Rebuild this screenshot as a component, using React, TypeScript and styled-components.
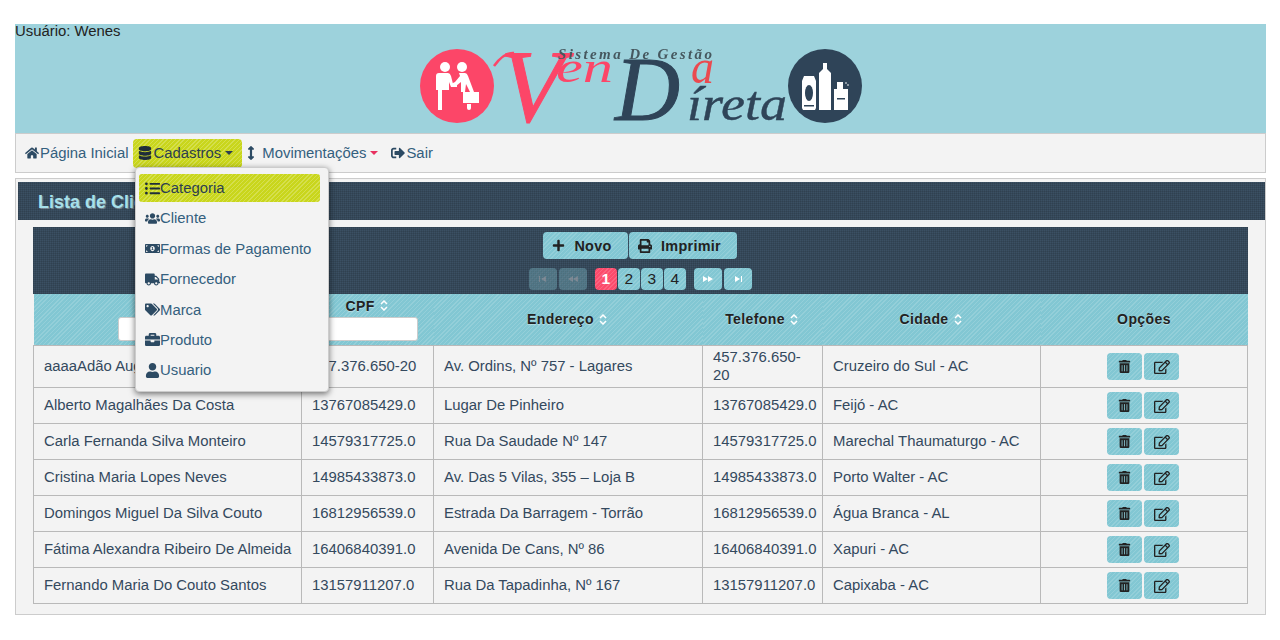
import styled, { createGlobalStyle, css } from "styled-components";
import {
  FaHome,
  FaDatabase,
  FaListUl,
  FaUsers,
  FaMoneyBillAlt,
  FaTruck,
  FaTags,
  FaBriefcase,
  FaUser,
  FaArrowsAltV,
  FaSignOutAlt,
  FaPlus,
  FaPrint,
  FaTrashAlt,
  FaRegEdit,
} from "react-icons/fa";

const GlobalStyle = createGlobalStyle`
  html, body {
    margin: 0;
    padding: 0;
    background: #fff;
    font-family: "Liberation Sans", Arial, sans-serif;
    font-size: 14.88px;
    color: #34495e;
  }
`;

const stripes = (base: string, light: string) => css`
  background-color: ${base};
  background-image: repeating-linear-gradient(135deg, ${light} 0 1px, transparent 1px 3px);
`;

const darkGrid = css`
  background-color: #3b5063;
  background-image:
    repeating-linear-gradient(0deg, rgba(0, 0, 0, 0.1) 0 1px, transparent 1px 2px),
    repeating-linear-gradient(90deg, rgba(0, 0, 0, 0.1) 0 1px, transparent 1px 2px);
`;

const Page = styled.div`
  width: 1251px;
  padding: 24px 0 0 15px;
`;

const Header = styled.header`
  display: grid;
  height: 109px;
  background: #9dd2dc;
`;

const UserLabel = styled.div`
  grid-area: 1 / 1;
  color: #222;
  line-height: 15px;
`;

const Logo = styled.svg`
  grid-area: 1 / 1;
  justify-self: center;
  margin: 16px 0 0 4px;
  overflow: visible;
  filter: blur(0.5px);
`;

const Nav = styled.nav`
  position: relative;
  display: flex;
  align-items: center;
  height: 38px;
  padding: 0 4px;
  background: #f3f3f3;
  border: 1px solid #ccc;
`;

const NavLink = styled.a<{ $active?: boolean; $gap?: number; $end?: number }>`
  display: flex;
  align-items: center;
  gap: ${(p) => p.$gap ?? 1}px;
  height: 29px;
  padding: 0 ${(p) => p.$end ?? 5}px 0 5px;
  border-radius: 4px;
  color: ${(p) => (p.$active ? "#2c3e50" : "#34607e")};
  ${(p) => p.$active && stripes("#c9d61c", "rgba(255, 255, 255, 0.22)")}

  svg {
    flex: none;
    color: ${(p) => (p.$active ? "#1f2d3a" : "#2c4a63")};
  }
`;

const NarrowIcon = styled.span`
  display: flex;
  justify-content: center;
  width: 8px;
  margin-right: 7px;
`;

const Caret = styled.span<{ $color: string; $space: number }>`
  width: 0;
  height: 0;
  margin-left: ${(p) => p.$space}px;
  border-top: 4px solid ${(p) => p.$color};
  border-left: 4px solid transparent;
  border-right: 4px solid transparent;
`;

const Menu = styled.ul`
  position: absolute;
  z-index: 5;
  top: 33px;
  left: 119px;
  width: 194px;
  box-sizing: border-box;
  margin: 0;
  padding: 6px 8px 4px 3px;
  list-style: none;
  background: #f3f3f3;
  border: 1px solid #ccc;
  border-radius: 4px;
  box-shadow: 0 2px 6px rgba(0, 0, 0, 0.55);
`;

const MenuItem = styled.li<{ $active?: boolean }>`
  display: flex;
  align-items: center;
  height: 28px;
  margin-bottom: 2.4px;
  padding-left: 6px;
  border-radius: 3px;
  color: ${(p) => (p.$active ? "#2c3e50" : "#34607e")};
  white-space: nowrap;
  ${(p) => p.$active && stripes("#c9d61c", "rgba(255, 255, 255, 0.22)")}

  svg {
    flex: none;
    color: ${(p) => (p.$active ? "#1f2d3a" : "#2c4a63")};
  }
`;

const Panel = styled.section`
  margin-top: 5px;
  padding: 3px 0 10px;
  background: #f3f3f3;
  border: 1px solid #ccc;
`;

const TitleBar = styled.h2`
  ${darkGrid}
  box-sizing: border-box;
  height: 38px;
  margin: 0 0 7px 2px;
  padding-left: 20px;
  color: #a7e0ea;
  font-size: 18px;
  font-weight: bold;
  line-height: 40px;
  text-shadow: 1px 1px 1px rgba(255, 255, 255, 0.35);
`;

const Content = styled.div`
  margin: 0 17px;
`;

const Toolbar = styled.div`
  ${darkGrid}
  display: flex;
  flex-direction: column;
  align-items: center;
  gap: 9px;
  box-sizing: border-box;
  height: 67px;
  padding-top: 5px;
`;

const ToolRow = styled.div<{ $indent?: number }>`
  display: flex;
  padding-left: ${(p) => p.$indent ?? 0}px;
`;

const ActionButton = styled.button<{ $width: number }>`
  ${stripes("#82c7d3", "rgba(255, 255, 255, 0.14)")}
  display: flex;
  align-items: center;
  justify-content: center;
  gap: 9px;
  width: ${(p) => p.$width}px;
  height: 27px;
  margin-right: 1px;
  padding: 0 7px 0 0;
  border: 0;
  border-radius: 4px;
  color: #222;
  font-family: inherit;
  font-size: 14.4px;
  font-weight: bold;
  letter-spacing: 0.3px;
`;

const PageButton = styled.span<{ $wide?: boolean; $current?: boolean; $muted?: boolean }>`
  ${(p) =>
    p.$current
      ? stripes("#fc4b6c", "rgba(255, 255, 255, 0.14)")
      : stripes("#82c7d3", "rgba(255, 255, 255, 0.14)")}
  display: flex;
  align-items: center;
  justify-content: center;
  width: ${(p) => (p.$wide ? 28 : 21.5)}px;
  height: 22px;
  margin-right: ${(p) => (p.$wide ? 2 : 1.5)}px;
  border-radius: 4px;
  color: ${(p) => (p.$current ? "#fff" : "#222")};
  font-size: 15.5px;
  font-weight: ${(p) => (p.$current ? "bold" : "normal")};
  opacity: ${(p) => (p.$muted ? 0.35 : 1)};
`;

const PageGap = styled.span<{ $width: number }>`
  width: ${(p) => p.$width}px;
`;

const Table = styled.table`
  width: 1215px;
  table-layout: fixed;
  border-collapse: collapse;
`;

const HeadCell = styled.th`
  ${stripes("#82c7d3", "rgba(255, 255, 255, 0.14)")}
  height: 50px;
  padding: 0 0 1px;
  color: #222;
  font-size: 14px;
  font-weight: bold;
  letter-spacing: 0.4px;
  text-align: center;
  text-shadow: 0 1px 1px rgba(255, 255, 255, 0.4);
  vertical-align: middle;
`;

const HeadLabel = styled.div`
  display: flex;
  align-items: center;
  justify-content: center;
  gap: 5px;
  padding-right: 2px;
`;

const FilterInput = styled.input`
  display: block;
  box-sizing: border-box;
  width: 100px;
  height: 24px;
  margin: 3px auto 0;
  background: #fff;
  border: 1px solid #ccc;
  border-radius: 3px;
`;

const Cell = styled.td<{ $center?: boolean; $nowrap?: boolean }>`
  padding: 3px 10px;
  border: 1px solid #b9b9b9;
  background: #f3f3f3;
  color: #34495e;
  font-size: 14.88px;
  line-height: 17.5px;
  text-align: ${(p) => (p.$center ? "center" : "left")};
  white-space: ${(p) => (p.$nowrap ? "nowrap" : "normal")};
`;

const RowActions = styled.div`
  display: flex;
  justify-content: center;
  gap: 2px;
  margin: 1px 0;
  padding-right: 2px;
`;

const IconButton = styled.button`
  ${stripes("#82c7d3", "rgba(255, 255, 255, 0.14)")}
  display: flex;
  align-items: center;
  justify-content: center;
  width: 35px;
  height: 27px;
  padding: 0;
  border: 0;
  border-radius: 4px;
  color: #222;
`;

const columns = [268, 132, 269, 120, 218, 207];

const clients = [
  ["aaaaAdão Augusto Silva", "457.376.650-20", "Av. Ordins, Nº 757 - Lagares", "457.376.650-20", "Cruzeiro do Sul - AC"],
  ["Alberto Magalhães Da Costa", "13767085429.0", "Lugar De Pinheiro", "13767085429.0", "Feijó - AC"],
  ["Carla Fernanda Silva Monteiro", "14579317725.0", "Rua Da Saudade Nº 147", "14579317725.0", "Marechal Thaumaturgo - AC"],
  ["Cristina Maria Lopes Neves", "14985433873.0", "Av. Das 5 Vilas, 355 – Loja B", "14985433873.0", "Porto Walter - AC"],
  ["Domingos Miguel Da Silva Couto", "16812956539.0", "Estrada Da Barragem - Torrão", "16812956539.0", "Água Branca - AL"],
  ["Fátima Alexandra Ribeiro De Almeida", "16406840391.0", "Avenida De Cans, Nº 86", "16406840391.0", "Xapuri - AC"],
  ["Fernando Maria Do Couto Santos", "13157911207.0", "Rua Da Tapadinha, Nº 167", "13157911207.0", "Capixaba - AC"],
];

const menuItems = [
  { label: "Categoria", icon: <FaListUl size={15} /> },
  { label: "Cliente", icon: <FaUsers size={15} /> },
  { label: "Formas de Pagamento", icon: <FaMoneyBillAlt size={15} /> },
  { label: "Fornecedor", icon: <FaTruck size={15} /> },
  { label: "Marca", icon: <FaTags size={15} /> },
  { label: "Produto", icon: <FaBriefcase size={15} /> },
  { label: "Usuario", icon: <FaUser size={15} /> },
];

function SortIcon() {
  return (
    <svg width="8" height="11" viewBox="0 0 8 11" fill="none" stroke="#fff" strokeWidth="1.5">
      <path d="M1 4l3-3 3 3M1 7l3 3 3-3" />
    </svg>
  );
}

function PagerArrow({ d }: { d: string }) {
  return (
    <svg width="12" height="8" viewBox="0 0 12 8" fill="#fff">
      <path d={d} />
    </svg>
  );
}

function VendaLogo() {
  const serif = "Liberation Serif";
  return (
    <Logo width="465" height="90" viewBox="410 40 465 90">
      <circle cx="457" cy="86" r="37" fill="#fc4668" />
      <g fill="#fff">
        <circle cx="445" cy="67" r="5" />
        <circle cx="462" cy="67" r="5" />
        <path d="M439 73h9q2 0 3 3l2 8h4v3h-6l-2-5v8h-7v20h-4v-20h-2v-14q0-3 3-3z" />
        <path d="M459 73h6q2 0 3 3l6 16h-4l-4-8-1 8h-4v-10l-5 4-4 1-1-3 4-2 5-6z" />
        <rect x="463" y="92" width="16" height="11" />
        <path d="M467 104h4v4q0 2-2 2t-2-2z" />
      </g>
      <path d="M494 66q10-14 20-13" fill="none" stroke="#fc4668" strokeWidth="2.5" />
      <text x="500" y="121" fontFamily={serif} fontStyle="italic" fontSize="104" stroke="#fc4668" strokeWidth="1" fill="#fc4668">V</text>
      <text x="556" y="82" fontFamily={serif} fontStyle="italic" fontSize="44" textLength="57" lengthAdjust="spacingAndGlyphs" fill="#fc4668">en</text>
      <text x="691" y="83" fontFamily={serif} fontStyle="italic" fontSize="48" textLength="23" lengthAdjust="spacingAndGlyphs" fill="#ea4a50">a</text>
      <text x="558" y="59" fontFamily={serif} fontStyle="italic" fontWeight="bold" fontSize="15" textLength="154" fill="#46585f">Sistema De Gestão</text>
      <text x="615" y="120" fontFamily={serif} fontStyle="italic" fontSize="90" stroke="#2f4458" strokeWidth="1" fill="#2f4458">D</text>
      <text x="687" y="120" fontFamily={serif} fontStyle="italic" fontSize="48" textLength="100" lengthAdjust="spacingAndGlyphs" stroke="#2f4458" strokeWidth="0.4" fill="#2f4458">íreta</text>
      <circle cx="825" cy="86" r="37" fill="#2f4458" />
      <g fill="#fff">
        <path d="M804 76h10l2 5v27l-1 2h-12l-1-2v-27z" />
        <path d="M823 63h4v6l4 4v37h-12v-37l4-4z" />
        <rect x="834" y="89" width="14" height="21" />
        <rect x="837" y="82" width="6" height="7" />
        <circle cx="846" cy="83" r="0.8" />
        <circle cx="848" cy="85" r="0.8" />
      </g>
      <ellipse cx="809" cy="93" rx="4" ry="8" fill="#2f4458" />
      <rect x="804" y="105" width="10" height="1.5" fill="#2f4458" />
      <rect x="837" y="98" width="8" height="1.5" fill="#2f4458" />
    </Logo>
  );
}

export default function App() {
  return (
    <>
      <GlobalStyle />
      <Page>
        <Header>
          <UserLabel>Usuário: Wenes</UserLabel>
          <VendaLogo />
        </Header>

        <Nav>
          <NavLink>
            <FaHome size={14} />
            Página Inicial
          </NavLink>
          <NavLink $active $end={9}>
            <FaDatabase size={14} />
            Cadastros
            <Caret $color="#2c3e50" $space={3} />
          </NavLink>
          <NavLink $end={8} $gap={0}>
            <NarrowIcon>
              <FaArrowsAltV size={14} />
            </NarrowIcon>
            Movimentações
            <Caret $color="#e8305f" $space={4} />
          </NavLink>
          <NavLink>
            <FaSignOutAlt size={14} />
            Sair
          </NavLink>
          <Menu>
            {menuItems.map((item, i) => (
              <MenuItem key={item.label} $active={i === 0}>
                {item.icon}
                {item.label}
              </MenuItem>
            ))}
          </Menu>
        </Nav>

        <Panel>
          <TitleBar>Lista de Clientes</TitleBar>
          <Content>
            <Toolbar>
              <ToolRow>
                <ActionButton $width={85}>
                  <FaPlus size={13} />
                  Novo
                </ActionButton>
                <ActionButton $width={108}>
                  <FaPrint size={14} />
                  Imprimir
                </ActionButton>
              </ToolRow>
              <ToolRow $indent={2}>
                <PageButton $wide $muted>
                  <PagerArrow d="M2 1h1v6h-1zM9 1v6l-5-3z" />
                </PageButton>
                <PageButton $wide $muted>
                  <PagerArrow d="M6 1v6l-5-3zM11 1v6l-5-3z" />
                </PageButton>
                <PageGap $width={6} />
                <PageButton $current>1</PageButton>
                <PageButton>2</PageButton>
                <PageButton>3</PageButton>
                <PageButton>4</PageButton>
                <PageGap $width={7} />
                <PageButton $wide>
                  <PagerArrow d="M1 1l5 3-5 3zM6 1l5 3-5 3z" />
                </PageButton>
                <PageButton $wide>
                  <PagerArrow d="M3 1l5 3-5 3zM9 1h1v6h-1z" />
                </PageButton>
              </ToolRow>
            </Toolbar>

            <Table>
              <colgroup>
                {columns.map((w, i) => (
                  <col key={i} width={w} />
                ))}
              </colgroup>
              <thead>
                <tr>
                  <HeadCell>
                    <HeadLabel>
                      Nome <SortIcon />
                    </HeadLabel>
                    <FilterInput />
                  </HeadCell>
                  <HeadCell>
                    <HeadLabel>
                      CPF <SortIcon />
                    </HeadLabel>
                    <FilterInput />
                  </HeadCell>
                  <HeadCell>
                    <HeadLabel>
                      Endereço <SortIcon />
                    </HeadLabel>
                  </HeadCell>
                  <HeadCell>
                    <HeadLabel>
                      Telefone <SortIcon />
                    </HeadLabel>
                  </HeadCell>
                  <HeadCell>
                    <HeadLabel>
                      Cidade <SortIcon />
                    </HeadLabel>
                  </HeadCell>
                  <HeadCell>Opções</HeadCell>
                </tr>
              </thead>
              <tbody>
                {clients.map((row) => (
                  <tr key={row[0]}>
                    {row.map((value, i) => (
                      <Cell key={i} $nowrap={i === 0}>
                        {value}
                      </Cell>
                    ))}
                    <Cell $center>
                      <RowActions>
                        <IconButton>
                          <FaTrashAlt size={13} />
                        </IconButton>
                        <IconButton>
                          <FaRegEdit size={16} />
                        </IconButton>
                      </RowActions>
                    </Cell>
                  </tr>
                ))}
              </tbody>
            </Table>
          </Content>
        </Panel>
      </Page>
    </>
  );
}
